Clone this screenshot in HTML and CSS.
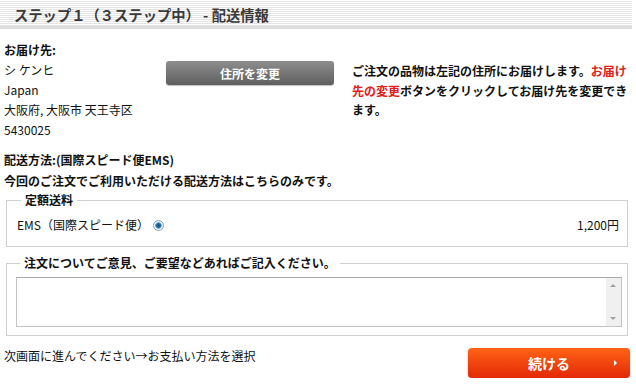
FILE: index.html
```html
<!DOCTYPE html>
<html lang="ja">
<head>
<meta charset="utf-8">
<link rel="stylesheet" href="styles.css">
</head>
<body>
<div class="page">
  <h2 class="step-title">ステップ１（３ステップ中） - 配送情報</h2>

  <div class="address-row">
    <div class="address">
      <div class="label">お届け先:</div>
      <div>シ ケンヒ</div>
      <div>Japan</div>
      <div>大阪府, 大阪市 天王寺区</div>
      <div>5430025</div>
    </div>
    <div class="change-col">
      <button class="btn-gray">住所を変更</button>
    </div>
    <p class="address-note">ご注文の品物は左記の住所にお届けします。<span class="red">お届け先の変更</span>ボタンをクリックしてお届け先を変更できます。</p>
  </div>

  <div class="method">
    <div class="label">配送方法:(国際スピード便EMS)</div>
    <div class="label">今回のご注文でご利用いただける配送方法はこちらのみです。</div>
  </div>

  <fieldset class="box rates">
    <legend>定額送料</legend>
    <div class="ship-row">
      <label class="ship-name">EMS（国際スピード便）<span class="radio"></span></label>
      <span class="price">1,200円</span>
    </div>
  </fieldset>

  <fieldset class="box comments">
    <legend>注文についてご意見、ご要望などあればご記入ください。</legend>
    <div class="textarea">
      <div class="scroll"><span class="up"></span><span class="down"></span></div>
    </div>
  </fieldset>

  <div class="footer">
    <div class="next-note">次画面に進んでください→お支払い方法を選択</div>
    <button class="btn-red">続ける<span class="tri"></span></button>
  </div>
</div>
</body>
</html>
```

FILE: styles.css
```css
html, body { margin: 0; padding: 0; background: #fff; }
body {
  font-family: "Noto Sans CJK JP", "Noto Sans", sans-serif;
  font-size: 12px;
  color: #111;
  line-height: 20px;
}
.page { width: 636px; }

.step-title {
  margin: 0;
  width: 632px;
  height: 29px;
  padding-left: 14px;
  box-sizing: border-box;
  font-size: 14.3px;
  line-height: 29px;
  font-weight: bold;
  color: #3a3a3a;
  background: repeating-linear-gradient(to bottom, #ffffff 0 1px, #e4e4e4 1px 2px);
  border-bottom: 3px solid #dedede;
}

.address-row {
  display: flex;
  padding: 11px 4px 0 4px;
}
.address { width: 162px; flex: none; }
.label { font-weight: bold; }
.change-col { width: 186px; flex: none; padding-top: 21px; }
.btn-gray {
  display: block;
  width: 168px;
  height: 24px;
  border: none;
  border-radius: 3px;
  background: linear-gradient(to bottom, #8e8e8e, #5e5e5e);
  color: #fff;
  font-family: inherit;
  font-size: 12px;
  font-weight: bold;
  padding: 0;
  box-shadow: 0 1px 1px rgba(0,0,0,0.25);
}
.address-note {
  margin: 0;
  padding-top: 21px;
  width: 280px;
  font-weight: bold;
  line-height: 19.5px;
}
.red { color: #e0201a; }

.method { padding: 9px 4px 0 4px; line-height: 21px; }

.box {
  margin: 0 8px 0 6px;
  border: 1px solid #d0d0d0;
  padding: 0 8px 0 10px;
}
.rates { margin-top: 2px; }
.box legend {
  font-weight: bold;
  padding: 0 4px;
  margin-left: 4px;
  line-height: 14px;
}
.ship-row {
  display: flex;
  justify-content: space-between;
  align-items: center;
  padding: 8px 0 11px 0;
}
.ship-name { display: flex; align-items: center; padding-left: 0; }
.radio {
  width: 9px; height: 9px;
  margin-left: 4px;
  border-radius: 50%;
  border: 1px solid #8aa4b8;
  background: radial-gradient(circle, #1d5f8f 0 2px, #6aa6d0 2.5px 3px, #eaf2f8 3.5px);
}
.price { padding-right: 0; }

.comments { margin-top: 9px; padding: 7px 5px 8px 9px; }
.textarea {
  height: 48px;
  border: 1px solid #c4c4c4;
  border-top-color: #a8a8a8;
  position: relative;
}
.scroll {
  position: absolute;
  right: 0; top: 0; bottom: 0;
  width: 15px;
  background: #f0f0f0;
}
.scroll .up, .scroll .down {
  position: absolute; left: 4px;
  width: 0; height: 0;
  border-left: 3px solid transparent;
  border-right: 3px solid transparent;
}
.scroll .up { top: 6px; border-bottom: 3px solid #a0a0a0; }
.scroll .down { bottom: 6px; border-top: 3px solid #a0a0a0; }

.footer {
  display: flex;
  justify-content: space-between;
  align-items: flex-start;
  padding: 12px 6px 0 4px;
}
.next-note { margin-top: -2px; }
.btn-red {
  position: relative;
  width: 162px;
  height: 30px;
  border: none;
  border-radius: 4px;
  background: linear-gradient(to bottom, #ff6414, #e42808);
  color: #fff;
  font-family: inherit;
  font-size: 14px;
  font-weight: bold;
  padding: 0;
  box-shadow: 0 1px 2px rgba(0,0,0,0.35);
}
.tri {
  position: absolute;
  right: 13px; top: 12px;
  width: 0; height: 0;
  border-top: 3px solid transparent;
  border-bottom: 3px solid transparent;
  border-left: 3px solid #fff;
}
```
